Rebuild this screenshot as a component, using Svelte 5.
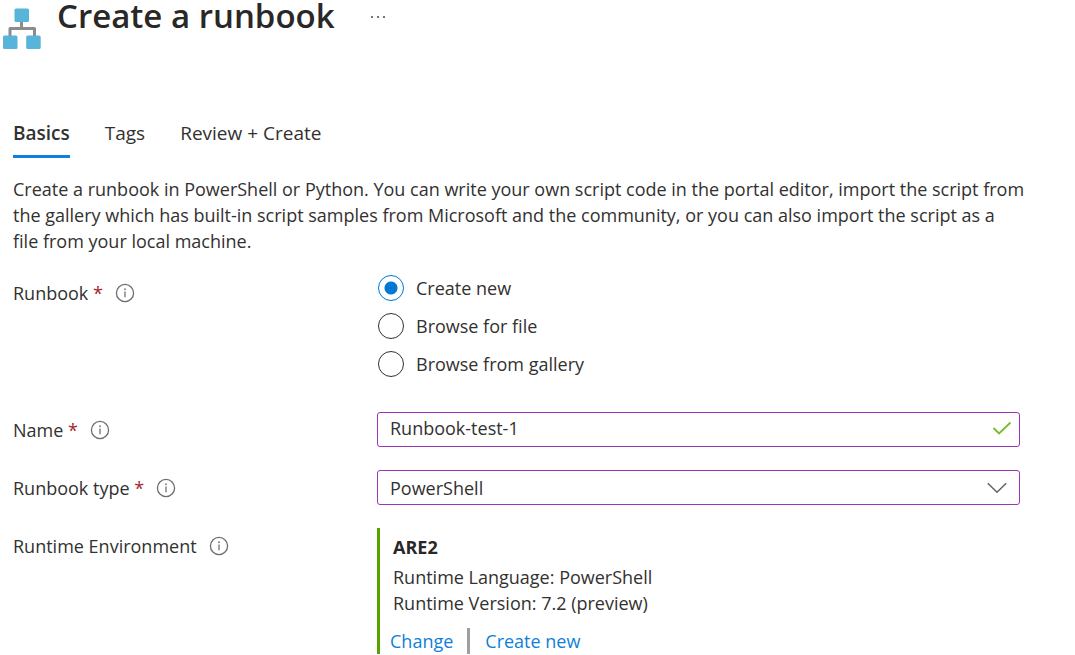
<script>
  const tabs = ['Basics', 'Tags', 'Review + Create'];
  const sources = ['Create new', 'Browse for file', 'Browse from gallery'];

  let activeTab = $state('Basics');
  let source = $state('Create new');
  let name = $state('Runbook-test-1');
  let type = $state('PowerShell');
</script>

{#snippet info(label)}
  <button class="info" type="button" aria-label={label}>
    <svg width="20" height="20" viewBox="0 0 20 20" fill="none" aria-hidden="true">
      <circle cx="10" cy="10" r="8.6" stroke="#6e6e6e" stroke-width="1.3" />
      <path d="M10 8.600v5.600" stroke="#858585" stroke-width="1.500" />
      <circle cx="10" cy="6.300" r="1" fill="#858585" />
    </svg>
  </button>
{/snippet}

<main>
  <header>
    <svg class="logo" width="38" height="41" viewBox="0 0 38 41" aria-hidden="true">
      <path d="M18.500 13v7.500M7 28v-7.500h24.500V28" fill="none" stroke="#8c8c8c" stroke-width="3" stroke-linejoin="round" />
      <rect x="11.500" y="0.500" width="14.500" height="13.500" rx="1.500" fill="#59b4d9" />
      <rect x="0" y="27.500" width="14.500" height="13.500" rx="1.500" fill="#59b4d9" />
      <rect x="23.200" y="27.500" width="14.500" height="13.500" rx="1.500" fill="#59b4d9" />
    </svg>
    <h1>Create a runbook</h1>
    <button class="more" type="button" aria-label="More options">
      <svg width="16" height="4" viewBox="0 0 16 4" fill="#555" aria-hidden="true">
        <circle cx="2" cy="2" r="1.100" /><circle cx="8" cy="2" r="1.100" /><circle cx="14" cy="2" r="1.100" />
      </svg>
    </button>
  </header>

  <nav>
    {#each tabs as tab}
      <button type="button" class:active={tab === activeTab} onclick={() => (activeTab = tab)}>{tab}</button>
    {/each}
  </nav>

  <p class="intro">
    Create a runbook in PowerShell or Python. You can write your own script code in the portal editor, import the script from
    the gallery which has built-in script samples from Microsoft and the community, or you can also import the script as a<br />
    file from your local machine.
  </p>

  <form>
    <div class="row runbook">
      <div class="label"><span id="source-label">Runbook <b>*</b></span>{@render info('About runbook')}</div>
      <div class="radios" role="radiogroup" aria-labelledby="source-label">
        {#each sources as option}
          <label><input type="radio" name="source" value={option} bind:group={source} />{option}</label>
        {/each}
      </div>
    </div>

    <div class="row">
      <div class="label"><label for="name">Name <b>*</b></label>{@render info('About name')}</div>
      <div class="field">
        <input id="name" type="text" bind:value={name} />
        <svg class="check" width="20" height="14" viewBox="0 0 20 14" fill="none" aria-hidden="true">
          <path d="M1.500 7l5.500 5.500L18.500 1.500" stroke="#76bc2d" stroke-width="1.800" />
        </svg>
      </div>
    </div>

    <div class="row">
      <div class="label"><label for="type">Runbook type <b>*</b></label>{@render info('About runbook type')}</div>
      <div class="field">
        <select id="type" bind:value={type}>
          <option>PowerShell</option>
          <option>Python</option>
        </select>
        <svg class="chevron" width="20" height="12" viewBox="0 0 20 12" fill="none" aria-hidden="true">
          <path d="M0.800 1.200L10 10.200l9.200-9" stroke="#666" stroke-width="1.600" />
        </svg>
      </div>
    </div>

    <div class="row">
      <div class="label"><span>Runtime Environment</span>{@render info('About runtime environment')}</div>
      <section class="environment">
        <h2>ARE2</h2>
        <p>Runtime Language: PowerShell</p>
        <p>Runtime Version: 7.2 (preview)</p>
        <div class="links">
          <a href="#change">Change</a>
          <a href="#create">Create new</a>
        </div>
      </section>
    </div>
  </form>
</main>

<style>
  :global(body) {
    margin: 0;
    background: #fff;
  }
  main {
    padding: 0 45px 0 13px;
    color: #323130;
    font: 18px/26px 'Segoe UI', 'Open Sans', 'Noto Sans', sans-serif;
  }
  button,
  input,
  select {
    font: inherit;
    color: inherit;
  }
  button {
    padding: 0;
    border: 0;
    background: none;
  }
  header {
    display: flex;
    align-items: flex-start;
    margin-left: -10px;
  }
  .logo {
    margin-top: 8px;
  }
  h1 {
    margin: 0 0 0 16px;
    font-size: 33px;
    line-height: 32px;
    font-weight: 600;
    color: #292827;
  }
  .more {
    display: flex;
    align-items: center;
    height: 34px;
    margin-left: 35px;
  }
  nav {
    display: flex;
    gap: 35px;
    margin-top: 71px;
    font-size: 19px;
  }
  nav button {
    padding-bottom: 9px;
    border-bottom: 3px solid transparent;
  }
  nav .active {
    font-weight: 600;
    border-color: #0f80dc;
  }
  .intro {
    margin: 18px 0 0;
  }
  form {
    display: flex;
    flex-direction: column;
    gap: 23px;
    margin: 21px 10px 0 0;
  }
  .row {
    display: grid;
    grid-template-columns: 364px minmax(0, 1fr);
  }
  .runbook {
    margin-bottom: 12px;
  }
  .label {
    display: flex;
    align-items: center;
    gap: 12px;
    height: 35px;
  }
  .label b {
    color: #a4262c;
    font-weight: 400;
  }
  .info {
    display: flex;
  }
  .radios {
    display: flex;
    flex-direction: column;
    gap: 12px;
  }
  .radios label {
    display: flex;
    align-items: center;
    gap: 12px;
  }
  .radios input {
    appearance: none;
    box-sizing: border-box;
    width: 26px;
    height: 26px;
    margin: 0 0 0 1px;
    border: 1px solid #323130;
    border-radius: 50%;
  }
  .radios input:checked {
    border-color: #0078d4;
    background: radial-gradient(circle, #0078d4 6px, transparent 7px);
  }
  .field {
    display: grid;
    align-items: center;
  }
  .field > * {
    grid-area: 1 / 1;
  }
  .field input,
  .field select {
    appearance: none;
    box-sizing: border-box;
    width: 100%;
    height: 35px;
    padding: 0 48px 0 12px;
    border: 1px solid #9a34b8;
    border-radius: 3px;
    background: #fff;
  }
  .field input {
    padding-bottom: 3px;
  }
  .field svg {
    justify-self: end;
    pointer-events: none;
  }
  .check {
    margin: 0 8px 4px 0;
  }
  .chevron {
    margin-right: 13px;
  }
  .environment {
    padding: 6px 0 0 13px;
    border-left: 3px solid #57a300;
  }
  h2 {
    margin: 0 0 4px;
    font-size: 18px;
    line-height: 26px;
    font-weight: 700;
    color: #292827;
  }
  .environment p {
    margin: 0;
  }
  .links {
    display: flex;
    margin: 12px 0 0 -3px;
  }
  a {
    color: #0f7fd9;
    text-decoration: none;
  }
  a + a {
    margin-left: 14px;
    padding-left: 15px;
    border-left: 3px solid #a19f9d;
  }
</style>
